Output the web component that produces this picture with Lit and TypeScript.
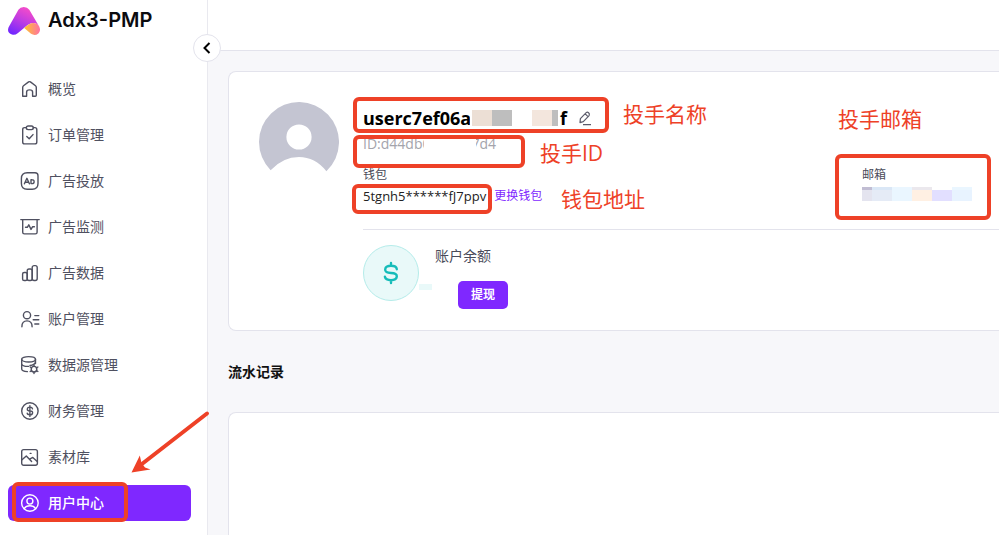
import { LitElement, html, css, svg } from "lit";
import { customElement, property } from "lit/decorators.js";
import { classMap } from "lit/directives/class-map.js";

const icons = {
  home: svg`<path d="M2.7 17.3V8.4Q2.7 7.4 3.5 6.8L8.6 2.9Q9.5 2.3 10.4 2.9L15.5 6.8Q16.3 7.4 16.3 8.4V16.3Q16.3 17.3 15.3 17.3H12.6V13Q12.6 10.9 9.6 10.9T6.6 13V17.3H2.7Z"/>`,
  order: svg`<path d="M6.2 2.6H4.6Q2.7 2.6 2.7 4.5V17Q2.7 18.9 4.6 18.9H14.9Q16.8 18.9 16.8 17V4.5Q16.8 2.6 14.9 2.6H13.3"/><rect x="6.3" y="1" width="7" height="3.6" rx="1.8"/><path d="M6.8 11.5L9.2 13.8L13 9.6"/>`,
  ad: svg`<path d="M7.2 1.7H15Q18 1.7 18 4.7V12.5Q18 18.3 12.2 18.3H7.2Q1.4 18.3 1.4 12.5V7.5Q1.4 1.7 7.2 1.7Z"/><path d="M4.4 12.8L6.9 7.3L9.4 12.8M5.4 11.2H8.4M11 8.7V12.6H12Q14.1 12.6 14.1 10.7T12 8.8Z"/>`,
  monitor: svg`<path d="M.8 2.6H19.2M2.7 2.6V15.2Q2.7 16.9 4.4 16.9H15.4Q17.1 16.9 17.1 15.2V2.6M5.5 10.3H7.3L8.8 7.8L11 12.4L12.5 9.8H14.4"/>`,
  chart: svg`<rect x="2.6" y="9.5" width="4.6" height="8" rx="1.6"/><rect x="7.2" y="6" width="5" height="11.5" rx="1.8"/><rect x="12.2" y="2.6" width="5" height="14.9" rx="1.9"/>`,
  account: svg`<circle cx="7" cy="6.2" r="3.6"/><path d="M1.9 17.7Q1.9 11.9 7 11.9T12.1 17.7M14.8 6.6H18.8M13.2 10.7H18.8M14.8 15H18.8"/>`,
  database: svg`<ellipse cx="8.6" cy="4.3" rx="6.9" ry="2.7"/><path d="M1.7 4.3V14Q1.7 16.2 7.4 16.6M1.7 8.8Q2.4 11.6 8.6 11.4M15.5 4.3V8.6M15.5 7Q14.7 10 10 10.5"/><circle cx="14" cy="14.2" r="2.8"/><path d="M14 9.9V11.4M14 17V18.6M10.2 12L11.6 12.8M16.4 15.6L17.9 16.5M10.2 16.5L11.6 15.6M16.4 12.8L17.9 12"/>`,
  finance: svg`<circle cx="9.9" cy="10" r="8.2"/><path d="M12.5 7.8Q12.2 6.1 9.9 6.1T7.3 8T9.9 9.9T12.6 11.9T9.9 13.8T7.2 12.1M9.9 4.6V15.4"/>`,
  image: svg`<rect x="1.7" y="2.6" width="15.7" height="15.7" rx="2"/><path d="M2 12.8L6.3 8.9L11.6 14.6M9.6 12.2L12.8 10.4L17.2 14.5M10.2 6.4H11"/>`,
  user: svg`<circle cx="9.9" cy="10" r="8.3"/><circle cx="9.9" cy="8.1" r="3"/><path d="M4.2 15.6Q6 12.8 9.9 12.8T15.6 15.6"/>`,
};

type IconName = keyof typeof icons;

const menu: { icon: IconName; label: string; active?: boolean }[] = [
  { icon: "home", label: "概览" },
  { icon: "order", label: "订单管理" },
  { icon: "ad", label: "广告投放" },
  { icon: "monitor", label: "广告监测" },
  { icon: "chart", label: "广告数据" },
  { icon: "account", label: "账户管理" },
  { icon: "database", label: "数据源管理" },
  { icon: "finance", label: "财务管理" },
  { icon: "image", label: "素材库" },
  { icon: "user", label: "用户中心", active: true },
];

@customElement("menu-icon")
export class MenuIcon extends LitElement {
  @property() name: IconName = "home";

  static styles = css`
    :host { display: block; width: 20px; height: 20px; flex: none; }
    .icon {
      display: block; width: 20px; height: 20px;
      fill: none; stroke: currentColor; stroke-width: 1.4;
      stroke-linecap: round; stroke-linejoin: round;
    }
  `;

  render() {
    return html`<svg class="icon" viewBox="0 0 20 20" aria-hidden="true">${icons[this.name]}</svg>`;
  }
}

@customElement("side-bar")
export class SideBar extends LitElement {
  static styles = css`
    :host {
      display: block; position: relative; flex: none; width: 208px; box-sizing: border-box;
      background: #fff; border-right: 1px solid #e9e9ef;
    }
    .brand { display: flex; align-items: center; gap: 8px; height: 40px; padding-left: 8px; }
    .logo { width: 32px; height: 28px; margin-top: 2px; }
    .brand-name { font: 600 20px/24px Inter, sans-serif; color: #0b0b0f; }
    .menu { display: flex; flex-direction: column; gap: 10px; padding: 31px 16px 14px 8px; }
    .item {
      display: flex; align-items: center; gap: 8px; height: 36px; padding-left: 12px;
      border-radius: 6px; color: #4f5060; text-decoration: none; font-size: 14px; line-height: 20px;
    }
    .active { background: #7f28ff; color: #fff; font-weight: 500; }
    .collapse {
      position: absolute; top: 34px; right: -14px; width: 28px; height: 28px; padding: 0;
      display: grid; place-items: center; background: #fff; border: 1px solid #e3e3ec;
      border-radius: 50%;
    }
    .chevron { width: 12px; height: 12px; fill: none; stroke: #000; stroke-width: 2; }
  `;

  render() {
    return html`
      <div class="brand">
        <svg class="logo" viewBox="0 0 32 28" aria-hidden="true">
          <defs>
            <linearGradient id="body" x1=".75" y1="0" x2=".2" y2="1">
              <stop offset="0" stop-color="#ff4fc4" /><stop offset=".5" stop-color="#c03de2" />
              <stop offset="1" stop-color="#7127ff" />
            </linearGradient>
            <linearGradient id="foot" x1="0" y1="0" x2="1" y2="0">
              <stop offset="0" stop-color="#ffc62c" /><stop offset="1" stop-color="#ff70a5" />
            </linearGradient>
          </defs>
          <path fill="url(#body)" d="M10.4 2.8Q12.2 0 15.8 0T21.3 2.8L31.2 19.5Q29 16 25.5 16Q21.5 16 17.2 20L10 26Q7 28.5 4 27.6Q-1.5 25.5.6 20.3Z" />
          <path fill="url(#foot)" d="M16.2 21Q21.5 16 25.2 16Q29.2 16 31 19.2Q33.3 23.4 30.4 26.4Q27 29.2 23 26.8Z" />
        </svg>
        <span class="brand-name">Adx3-PMP</span>
      </div>
      <nav class="menu">
        ${menu.map(
          (m) => html`<a href="#" class=${classMap({ item: true, active: !!m.active })}>
            <menu-icon name=${m.icon}></menu-icon><span>${m.label}</span>
          </a>`
        )}
      </nav>
      <button class="collapse" aria-label="收起菜单">
        <svg class="chevron" viewBox="0 0 12 12"><path d="M8.5 1L3.5 6L8.5 11" /></svg>
      </button>
    `;
  }
}

@customElement("profile-card")
export class ProfileCard extends LitElement {
  static styles = css`
    :host {
      display: flex; gap: 24px; padding: 30px 0 21px 30px; background: #fff;
      border: 1px solid #e3e3ec; border-right: 0; border-radius: 8px 0 0 8px;
    }
    .avatar { width: 80px; height: 80px; flex: none; }
    .info { flex: 1; min-width: 0; }
    .name {
      display: flex; align-items: center; height: 32px; margin: 0;
      font-size: 18px; line-height: 32px; font-weight: 700; color: #000;
    }
    .name-head { width: 107px; overflow: hidden; white-space: nowrap; }
    .mask { display: flex; height: 16px; margin: 0 2px; }
    .mask-cell { width: 20px; }
    .mask-end { width: 6px; }
    .sand { background: #ecdfd5; }
    .cream { background: #f3e6dd; }
    .gray { background: #bebebe; }
    .edit { width: 16px; height: 16px; margin-left: 10px; padding: 0; border: 0; background: none; }
    .edit-icon { display: block; width: 16px; height: 16px; fill: none; stroke: #5b5b6b; stroke-width: 1.2; stroke-linejoin: round; }
    .uid {
      position: relative; display: flex; justify-content: space-between; width: 133px;
      height: 20px; font-size: 14px; line-height: 20px; color: #a4a4ac;
    }
    .uid-cover { position: absolute; left: 61px; top: 0; width: 52px; height: 20px; background: #fff; }
    .contacts {
      display: grid; grid-template-columns: 1fr 137px; padding: 11px 0 22px;
      border-bottom: 1px solid #e3e3ec;
    }
    .caption { font-size: 12px; line-height: 20px; color: #4a4b59; }
    .wallet { display: flex; align-items: center; gap: 8px; height: 22px; font-size: 13px; line-height: 22px; color: #222; }
    .change { font-size: 12px; color: #7f28ff; text-decoration: none; }
    .mail { display: grid; grid-template-columns: 10px repeat(5, 20px); grid-template-rows: 3px 11px; margin-top: 2px; }
    .m1 { background: #c1bdd3; } .m2 { background: #dae7f6; } .m3 { background: #eaf6ff; }
    .m4 { background: #ebe8ed; } .m5 { background: #e2dfff; } .m6 { background: #e4e4ef; }
    .m7 { background: #e5ebf6; } .m8 { background: #fff0e3; } .m9 { background: #e8f3ff; }
    .m0 { background: #fff; }
    .balance { display: flex; padding-top: 15px; }
    .coin {
      display: grid; place-items: center; width: 54px; height: 54px; flex: none;
      border: 1px solid #b5ecea; border-radius: 50%; background: #e9f9f9;
    }
    .dollar { width: 16px; height: 24px; fill: none; stroke: #16bcb9; stroke-width: 2.4; stroke-linecap: round; }
    .speck { align-self: flex-end; width: 13px; height: 6px; margin-bottom: 19px; background: #e9f9f9; }
    .amount { padding-left: 3px; font-size: 14px; line-height: 22px; color: #4a4b59; }
    .withdraw {
      display: block; width: 50px; height: 28px; margin: 14px 0 0 23px; padding: 0; border: 0;
      border-radius: 5px; background: #7f28ff; color: #fff; font: inherit; font-size: 12px; font-weight: 700;
    }
  `;

  render() {
    return html`
      <svg class="avatar" viewBox="0 0 80 80" role="img" aria-label="头像">
        <path fill="#c4c5d2" fill-rule="evenodd" d="M11.6 68.2A40 40 0 1 1 67.4 69.2Q56 55 40 55T11.6 68.2ZM27.4 35a12.6 12.6 0 1 0 25.2 0a12.6 12.6 0 1 0-25.2 0Z" />
      </svg>
      <div class="info">
        <h1 class="name">
          <span class="name-head">userc7ef06a</span>
          <span class="mask">
            <span class="mask-cell sand"></span><span class="mask-cell gray"></span>
            <span class="mask-cell"></span><span class="mask-cell cream"></span>
            <span class="mask-end gray"></span>
          </span>
          <span>f</span>
          <button class="edit" aria-label="编辑名称">
            <svg class="edit-icon" viewBox="0 0 16 16">
              <path d="M3 12.6L3.4 8.6L9.2 2.7Q10.3 1.6 11.6 2.7T12.1 5.6L6.3 11.6ZM8.2 3.8L11 6.6M6 14.6H14" />
            </svg>
          </button>
        </h1>
        <div class="uid"><span>ID:d44db0</span><span>7d4</span><span class="uid-cover"></span></div>
        <div class="contacts">
          <div>
            <div class="caption">钱包</div>
            <div class="wallet"><span>5tgnh5******fJ7ppv</span><a class="change" href="#">更换钱包</a></div>
          </div>
          <div>
            <div class="caption">邮箱</div>
            <div class="mail">
              ${[1, 2, 3, 4, 0, 3, 6, 7, 3, 8, 5, 9].map((n) => html`<span class="m${n}"></span>`)}
            </div>
          </div>
        </div>
        <div class="balance">
          <div class="coin">
            <svg class="dollar" viewBox="0 0 16 24">
              <path d="M13.8 8.2Q13.4 4.8 8 4.8T2.2 8.3T8 12T13.8 15.7T8 19.2T1.9 15.8M8 2V4.5M8 19.5V22" />
            </svg>
          </div>
          <span class="speck"></span>
          <div class="amount">账户余额<button class="withdraw">提现</button></div>
        </div>
      </div>
    `;
  }
}

@customElement("guide-marks")
export class GuideMarks extends LitElement {
  static styles = css`
    :host { position: absolute; inset: 0; pointer-events: none; overflow: hidden; color: #ee4127; }
    .frame { position: absolute; box-sizing: border-box; border: 4px solid #ee4127; border-radius: 6px; }
    .note { position: absolute; font-size: 21px; line-height: 28px; white-space: nowrap; }
    .arrow { position: absolute; left: 128px; top: 408px; width: 84px; height: 68px; }
    .f-name { left: 353px; top: 97px; width: 256px; height: 36px; }
    .f-id { left: 353px; top: 135px; width: 172px; height: 33px; }
    .f-wallet { left: 352px; top: 184px; width: 140px; height: 30px; }
    .f-mail { left: 835px; top: 154px; width: 156px; height: 66px; }
    .f-menu { left: 12px; top: 482px; width: 116px; height: 40px; }
    .n-name { left: 623px; top: 100px; }
    .n-id { left: 540px; top: 139px; }
    .n-wallet { left: 561px; top: 185px; }
    .n-mail { left: 838px; top: 105px; }
  `;

  render() {
    return html`
      <div class="frame f-name"></div>
      <div class="frame f-id"></div>
      <div class="frame f-wallet"></div>
      <div class="frame f-mail"></div>
      <div class="frame f-menu"></div>
      <span class="note n-name">投手名称</span>
      <span class="note n-id">投手ID</span>
      <span class="note n-wallet">钱包地址</span>
      <span class="note n-mail">投手邮箱</span>
      <svg class="arrow" viewBox="0 0 84 68" aria-hidden="true">
        <path d="M79 5.5L12 57.5" stroke="#ee4127" stroke-width="4" stroke-linecap="round" />
        <path d="M3.5 64.5L11.8 47.5L13.5 55L17 59.5L22.5 61.5Z" fill="#ee4127" />
      </svg>
    `;
  }
}

@customElement("app-root")
export class AppRoot extends LitElement {
  static styles = css`
    :host {
      display: flex; position: relative; min-height: 100vh; background: #f7f7fa;
      font-family: "Open Sans", "Noto Sans CJK SC", sans-serif;
    }
    .page { flex: 1; min-width: 0; display: flex; flex-direction: column; }
    .topbar { height: 50px; background: #fff; border-bottom: 1px solid #e3e3ec; }
    .content { flex: 1; display: flex; flex-direction: column; padding: 20px 0 0 20px; }
    .section-title { margin: 30px 0; font-size: 14px; line-height: 21px; font-weight: 700; color: #111; }
    .records {
      flex: 1; background: #fff; border: 1px solid #e3e3ec; border-width: 1px 0 0 1px;
      border-radius: 8px 0 0 0;
    }
  `;

  render() {
    return html`
      <side-bar></side-bar>
      <div class="page">
        <header class="topbar"></header>
        <main class="content">
          <profile-card></profile-card>
          <h2 class="section-title">流水记录</h2>
          <section class="records" aria-label="流水记录"></section>
        </main>
      </div>
      <guide-marks></guide-marks>
    `;
  }
}
